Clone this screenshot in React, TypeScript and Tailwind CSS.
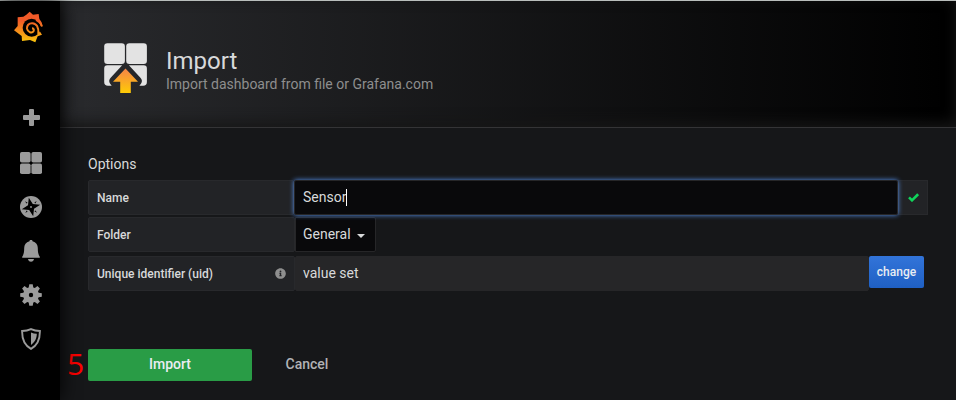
import React from "react";
import { FaInfoCircle } from "react-icons/fa";

function Logo() {
  return (
    <svg width="32" height="32" viewBox="0 0 96 96" className="mt-[10px] mr-[4px] shrink-0">
      <defs>
        <linearGradient id="flame" x1="0" y1="0" x2="0" y2="96" gradientUnits="userSpaceOnUse">
          <stop offset="0" stopColor="#f05a28" />
          <stop offset=".3" stopColor="#f05a28" />
          <stop offset="1" stopColor="#fbca0a" />
        </linearGradient>
      </defs>
      <path d="M50 2 60 11 77 9 79 24Q87 32 89 46L84 48 80 60 87 71 74 76 67 94 51 87 27 90 26 75 3 58 14 45 14 19 31 17 40 11z" fill="url(#flame)" />
      <circle cx="56" cy="50" r="27" fill="#000" />
      <path d="M78 38 84 47 92 48 90 62 78 60z" fill="#000" />
      <path d="M70 20Q86 28 89 46L85 46Q80 35 68 29z" fill="url(#flame)" />
      <path d="M76 70C78 48 70 37 58 36.500 47 36 41 44 42 53 44 64 57 68 62 60 64 55 61 52 57 52" fill="none" stroke="url(#flame)" strokeWidth="6" />
    </svg>
  );
}

function PlusIcon() {
  return (
    <svg width="17" height="17" viewBox="0 0 17 17" fill="currentColor">
      <path d="M6 1Q6 0 7 0h3q1 0 1 1v5h5q1 0 1 1v3q0 1-1 1h-5v5q0 1-1 1H7q-1 0-1-1v-5H1q-1 0-1-1V7q0-1 1-1h5z" />
    </svg>
  );
}

function GridIcon() {
  return (
    <svg width="22" height="22" viewBox="0 0 22 22" fill="currentColor">
      <rect width="10.6" height="10.6" rx="1.8" />
      <rect x="11.4" width="10.6" height="10.6" rx="1.8" />
      <rect y="11.4" width="10.6" height="10.6" rx="1.8" />
      <rect x="11.4" y="11.4" width="10.6" height="10.6" rx="1.8" />
    </svg>
  );
}

function CompassIcon() {
  return (
    <svg width="22" height="22" viewBox="0 0 22 22">
      <circle cx="11" cy="11" r="11" fill="currentColor" />
      <g fill="#000">
        <path d="M8.800 1.800 12.800 8 20.200 8.800 14 12.800 13.200 20.200 9.200 14 1.800 13.200 8 9.200z" />
        <path d="M5 5.300 7.600 6.700 6.500 7.600zM16.700 5 15.300 7.600 14.400 6.500zM17 16.700 14.400 15.300 15.500 14.400zM5.300 17 6.700 14.400 7.600 15.500z" />
      </g>
      <circle cx="11" cy="11" r=".9" fill="currentColor" />
    </svg>
  );
}

function BellIcon() {
  return (
    <svg width="18" height="22" viewBox="0 0 18 22" fill="currentColor">
      <path d="M7.500 1.300a1.500 1.500 0 0 1 3 0C14 2 15.800 4.700 15.800 8.100c0 3.800.4 6.300 2 8.700v1H.2v-1c1.600-2.400 2-4.900 2-8.700C2.200 4.700 4 2 7.500 1.300zM6 19h6c-.2 1.600-1.400 2.700-3 2.700S6.200 20.600 6 19z" />
    </svg>
  );
}

function GearIcon() {
  return (
    <svg width="22" height="22" viewBox="0 0 22 22" fill="currentColor">
      <path
        fillRule="evenodd"
        d="M9.300.2h3.400l.6 3.200 1.500.6 2.700-1.900 2.400 2.400L18 7.200l.6 1.500 3.200.6v3.400l-3.200.6-.6 1.500 1.900 2.700-2.400 2.400-2.700-1.900-1.500.6-.6 3.200H9.300l-.6-3.200-1.500-.6-2.700 1.900-2.400-2.400L4 14.800l-.6-1.500-3.200-.6V9.300l3.200-.6L4 7.200 2.100 4.500l2.400-2.400L7.200 4l1.500-.6zM11 8.800a2.200 2.200 0 1 0 0 4.400 2.200 2.200 0 0 0 0-4.400z"
      />
    </svg>
  );
}

function ShieldIcon() {
  return (
    <svg width="20" height="22" viewBox="0 0 20 22">
      <path d="M10 1.100C7.300 2.400 4.400 3 1.100 3 1 10.500 3 17 10 20.800 17 17 19 10.500 18.900 3 15.600 3 12.700 2.400 10 1.100z" fill="none" stroke="currentColor" strokeWidth="1.900" />
      <path d="M10 4.500c1.900.8 3.800 1.200 5.800 1.300-.1 4.600-1.700 8.300-5.800 11.100z" fill="currentColor" />
    </svg>
  );
}

function ImportIcon() {
  return (
    <svg width="44" height="50" viewBox="0 0 44 50">
      <defs>
        <linearGradient id="arrow" x1="0" y1="0" x2="0" y2="1">
          <stop offset="0" stopColor="#f58448" />
          <stop offset="1" stopColor="#ffcb05" />
        </linearGradient>
      </defs>
      <g fill="#e3e3e3">
        <rect x=".2" y=".2" width="20.700" height="20.700" rx="3.200" />
        <rect x="22.200" y=".2" width="20.700" height="20.700" rx="3.200" />
        <path d="M3.400 22.200h14.800L6.900 34.500Q4 37.700 6 40.500l1.700 2.300H4Q.2 42.800.2 39V25.400q0-3.200 3.200-3.200z" />
        <path d="M39.700 22.200H24.900l11.300 12.300q2.900 3.200.9 6l-1.700 2.300h3.700q3.800 0 3.800-3.800V25.400q0-3.200-3.200-3.200z" />
      </g>
      <path d="M21.500 25.600 34 38.700h-7.200v11.200H16.200V38.700H9z" fill="url(#arrow)" />
    </svg>
  );
}

const label = "flex h-[35px] items-center rounded-[2px] border border-[#28292c] bg-[#222326] px-2 text-[12px] font-medium text-[#d8d9da]";

export default function App() {
  return (
    <div className="flex h-[400px] w-[956px] flex-col overflow-hidden bg-[#161719] font-['Roboto',sans-serif] text-[#d8d9da]">
      <div className="h-px shrink-0 bg-[#b9bebc]" />
      <div className="flex min-h-0 flex-1">
        <nav className="z-10 flex w-[60px] shrink-0 flex-col items-center bg-black pl-[2px] text-[#9b9b9b] shadow-[0_0_20px_black]">
          <Logo />
          <div className="mt-[53px] flex flex-col">
            <div className="flex h-[45px] items-start justify-center pt-[13px] pl-px"><PlusIcon /></div>
            <div className="flex h-11 items-center justify-center"><GridIcon /></div>
            <div className="flex h-11 items-center justify-center"><CompassIcon /></div>
            <div className="flex h-11 items-center justify-center"><BellIcon /></div>
            <div className="flex h-11 items-center justify-center"><GearIcon /></div>
            <div className="flex h-11 items-center justify-center"><ShieldIcon /></div>
          </div>
        </nav>

        <main className="flex min-w-0 flex-1 flex-col">
          <header className="flex h-[127px] shrink-0 border-b border-[#343436] bg-linear-to-r/srgb from-[#292a2d] to-black pt-[42px] pl-11 shadow-[inset_0_-4px_14px_#161616]">
            <ImportIcon />
            <div className="ml-[18px] pt-[3px]">
              <h1 className="text-[24px] leading-[30px]">Import</h1>
              <p className="text-[14px] leading-[16px] text-[#8e8e8e]">Import dashboard from file or Grafana.com</p>
            </div>
          </header>

          <section className="flex flex-col pl-7">
            <h2 className="mt-[27px] h-[25px] text-[14px] leading-[18px]">Options</h2>
            <div className="flex">
              <div className={`${label} w-[206px]`}>Name</div>
              <div className="z-10 flex h-[35px] w-[604px] items-center rounded-[2px] border border-[#262628] bg-[#09090b] px-2 text-[14px] shadow-[0_0_5px_#5794f2]">
                Sensor<span className="h-[17px] w-px bg-white" />
              </div>
              <div className="flex h-[35px] w-[30px] items-center justify-center border border-[#28292c] bg-[#222326] pl-px">
                <svg width="11" height="9" viewBox="0 0 11 9" fill="none" stroke="#10d45b" strokeWidth="2.600">
                  <path d="m1 4.300 3 3L10.100 1.200" />
                </svg>
              </div>
            </div>
            <div className="mt-[2px] flex">
              <div className={`${label} w-[207px]`}>Folder</div>
              <div className="flex h-[35px] w-[81px] items-center rounded-r-[2px] border border-[#262628] bg-[#09090b] pl-[7px] text-[14px]">
                <span>General</span>
                <span className="mt-[3px] ml-[6px] border-x-4 border-t-4 border-x-transparent border-t-[#d8d9da]" />
              </div>
            </div>
            <div className="mt-1 flex">
              <div className={`${label} w-[207px] justify-between`}>
                <span>Unique identifier (uid)</span>
                <FaInfoCircle className="size-[11px] text-[#8e8e8e]" />
              </div>
              <div className="flex h-[35px] w-[574px] items-center rounded-[2px] border border-[#262628] bg-[#262628] pl-[7px] text-[14px]">value set</div>
              <button className="h-8 w-[55px] rounded-[2px] bg-linear-to-b from-[#3274d9] to-[#1f60c4] text-[12px] font-medium text-[#e9edf2]">change</button>
            </div>
            <div className="mt-[58px] -ml-[22px] flex items-start">
              <span className="-mt-px w-[22px] pl-px font-['Open_Sans',sans-serif] text-[30px] leading-8 font-medium text-[#f00]">5</span>
              <button className="h-8 w-[164px] rounded-[2px] bg-[#299c46] pb-[2px] text-[14px] font-medium text-[#e9edf2]">Import</button>
              <span className="ml-[33.500px] text-[14px] leading-[30px] font-medium text-[#b2b3b5]">Cancel</span>
            </div>
          </section>
        </main>
      </div>
    </div>
  );
}
